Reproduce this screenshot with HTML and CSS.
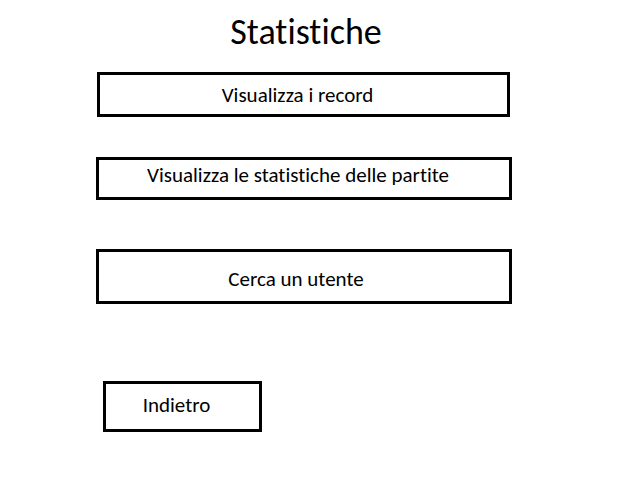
FILE: index.html
```html
<!DOCTYPE html>
<html lang="it">
<head>
<meta charset="utf-8">
<meta name="viewport" content="width=device-width, initial-scale=1">
<title>Statistiche</title>
<link rel="stylesheet" href="styles.css">
</head>
<body>
<main class="page">
  <h1 class="title">Statistiche</h1>
  <nav class="menu" aria-label="Statistiche">
    <button class="option records" type="button">Visualizza i record</button>
    <button class="option matches" type="button">Visualizza le statistiche delle partite</button>
    <button class="option search" type="button">Cerca un utente</button>
    <button class="option back" type="button">Indietro</button>
  </nav>
</main>
</body>
</html>
```
FILE: styles.css
```css
* {
  box-sizing: border-box;
}

body {
  margin: 0;
  background: #fff;
  color: #000;
  font-family: Carlito, Calibri, Lato, sans-serif;
  font-variant-ligatures: none;
}

.page {
  padding: 8px 20% 48px 15%;
}

.title {
  margin: 0 0 16px;
  padding-left: 4px;
  font-size: 36px;
  font-weight: 400;
  line-height: 48px;
  text-align: center;
}

.menu {
  display: flex;
  flex-direction: column;
  align-items: stretch;
}

.option {
  padding: 0 12px 0 0;
  border: 3px solid #000;
  border-radius: 0;
  background: #fff;
  color: inherit;
  font-family: inherit;
  font-variant-ligatures: inherit;
  font-size: 21px;
  line-height: 24px;
  text-align: center;
  cursor: pointer;
}

.records {
  height: 45px;
  margin: 0 2px 40px 1px;
}

.matches {
  height: 43px;
  margin-bottom: 49px;
  padding-bottom: 8px;
}

.search {
  height: 55px;
  margin-bottom: 77px;
  padding-right: 16px;
  padding-top: 4px;
}

.back {
  align-self: flex-start;
  width: 159px;
  height: 51px;
  margin-left: 7px;
  padding-bottom: 4px;
}
```
